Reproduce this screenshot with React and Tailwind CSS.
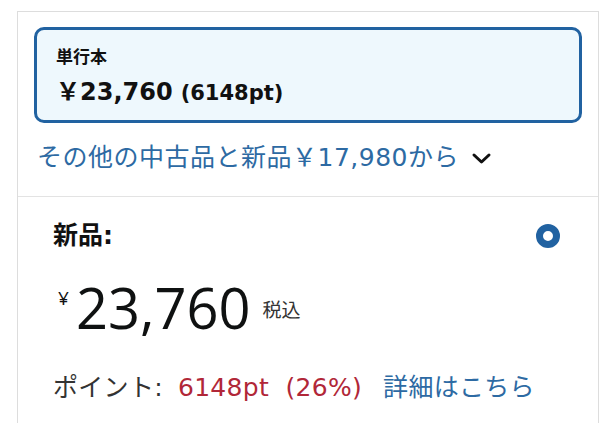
import React from "react";

const JP = { fontFamily: '"DejaVu Sans", "Noto Sans CJK JP", sans-serif' };
const OPEN = { fontFamily: '"Open Sans", "Noto Sans CJK JP", sans-serif' };

export default function App() {
  return (
    <div className="w-[615px] h-[423px] overflow-hidden bg-white" style={JP}>
      <div className="pt-[11px] pl-[17px] pr-[16px] h-full">
        <div className="h-full border border-b-0 border-[#dddddd] flex flex-col">
          <div className="pt-[15px] pl-[16px] pr-[16px]">
            <div className="h-[96px] rounded-[10px] border-[3px] border-[#2162a1] bg-[#eef8fd] pl-[19px] pt-[17px]">
              <div className="text-[17px] font-bold leading-[20px] text-[#111]">単行本</div>
              <div className="mt-[10px] flex items-baseline font-bold text-[#111] leading-[30px]">
                <span className="text-[24px]">￥23,760</span>
                <span className="ml-[8px] text-[21px]">(6148pt)</span>
              </div>
            </div>
          </div>
          <div className="pl-[19px] pt-[20px] h-[73px] flex items-start">
            <span className="text-[25px] leading-[30px] tracking-[0.5px] text-[#2d6aa3]">その他の中古品と新品￥17,980から</span>
            <svg className="ml-[12px] mt-[9px]" width="21" height="13" viewBox="0 0 21 13">
              <path d="M3 3 L10.5 10 L18 3" fill="none" stroke="#111" strokeWidth="3" strokeLinecap="round" strokeLinejoin="round" />
            </svg>
          </div>
          <div className="flex-1 border-t border-[#e3e3e3] pl-[35px] pr-[38px]">
            <div className="flex items-center justify-between pt-[25px]">
              <span className="text-[25px] font-bold leading-[28px] text-[#111]">新品:</span>
              <span className="w-[24px] h-[24px] rounded-full border-[7.5px] border-[#2162a1] bg-white"></span>
            </div>
            <div className="mt-[29px] ml-[5px] flex items-start h-[56px]">
              <span className="text-[19px] leading-[20px] mt-[9px] text-[#111]" style={OPEN}>¥</span>
              <span className="ml-[7px] text-[56px] leading-[56px] text-[#0f1111]" style={OPEN}>23,760</span>
              <span className="ml-[12px] mt-[20px] text-[19px] leading-[22px] text-[#333]">税込</span>
            </div>
            <div className="mt-[38px] text-[25px] leading-[30px] tracking-[0.3px] flex">
              <span className="text-[#333]">ポイント:</span>
              <span className="ml-[15px] text-[#b12738]">6148pt&nbsp;&nbsp;(26%)</span>
              <span className="ml-[21px] text-[#2d6aa3]">詳細はこちら</span>
            </div>
          </div>
        </div>
      </div>
    </div>
  );
}
